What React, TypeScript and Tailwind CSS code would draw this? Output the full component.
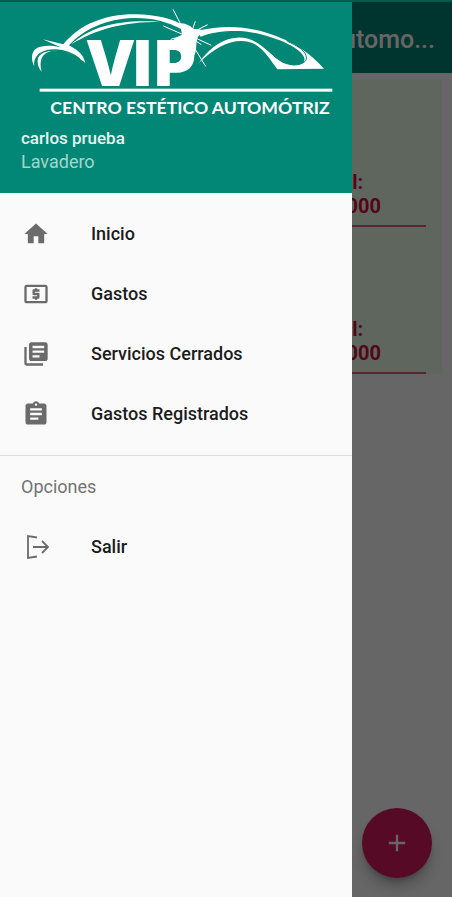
import type { IconType } from "react-icons";
import { MdAssignment, MdHome, MdLibraryBooks, MdLocalAtm, MdAdd } from "react-icons/md";

function Logo() {
  return (
    <svg viewBox="0 0 1056 369" className="block w-full" fill="#fff" role="img" aria-label="VIP Centro Estético Automótriz">
      {/* rear body line */}
      <path d="M128 112 L190 127 C240 65 320 36 405 37 C470 38 520 50 556 74 L545 82 C500 58 455 47 400 48 C320 50 250 82 207 130 C240 148 250 160 256 183 C210 145 160 135 132 158 C120 170 120 190 125 209 C108 190 110 165 124 150 C108 160 100 175 103 193 C92 170 92 140 122 134 C145 129 165 132 182 136 Z" />
      <path d="M214 127 C270 75 350 52 480 59 C370 60 290 80 214 127 Z" />
      <path d="M108 170 C130 132 200 138 240 172" fill="none" stroke="#028675" strokeWidth="4" />
      {/* front body line */}
      <path d="M590 88 C680 65 760 75 830 103 C900 132 935 160 972 200 L832 202 C812 175 795 145 765 127 C715 102 655 125 596 184 C640 120 695 98 745 110 C790 125 815 165 850 183 C890 200 925 185 910 162 C890 125 780 90 720 87 C670 86 630 92 602 104 Z" />
      <path d="M820 160 C860 195 930 195 918 160 C910 142 890 130 862 118" fill="none" stroke="#028675" strokeWidth="3" />
      {/* flash */}
      <path d="M540 64 C556 64 570 70 579 80 L612 84 L594 104 C586 120 592 140 584 158 C574 178 560 184 545 184 L548 130 L520 112 L546 98 Z" />
      <path d="M519 22 L548 78 M577 84 L586 58 M580 90 L623 68 M585 98 L637 91 M582 106 L634 130 M580 112 L604 128 M576 126 L617 193 M550 98 L490 72 M548 102 L512 112" fill="none" stroke="#fff" strokeWidth="3" />
      <g fontFamily="Inter, 'Liberation Sans', sans-serif" fontWeight="900" fontSize="190">
        <text x="256 400 463" y="251">VIP</text>
      </g>
      <rect x="119" y="260" width="878" height="9" />
      <text x="151" y="335" fontFamily="Lato, 'Liberation Sans', sans-serif" fontWeight="700" fontSize="53">
        CENTRO ESTÉTICO AUTOMÓTRIZ
      </text>
    </svg>
  );
}

function ExitIcon() {
  return (
    <svg viewBox="0 0 28 28" className="size-7" fill="none" stroke="currentColor" strokeWidth="2">
      <path d="M15 4.500L6 3V25L15 23.500" strokeWidth="1.800" />
      <path d="M11 14H26M20 8L26 14L20 20" strokeWidth="1.800" />
    </svg>
  );
}

const items: { label: string; Icon: IconType }[] = [
  { label: "Inicio", Icon: MdHome },
  { label: "Gastos", Icon: MdLocalAtm },
  { label: "Servicios Cerrados", Icon: MdLibraryBooks },
  { label: "Gastos Registrados", Icon: MdAssignment },
];

const rowClass = "flex h-15 w-full items-center gap-[41px] pl-[22px] text-left text-[18px] leading-6 font-medium text-[#1c1c1c]";

function Drawer() {
  return (
    <aside className="absolute inset-y-0 left-0 flex w-[352px] flex-col bg-[#fafafa]">
      <header className="h-[191px] bg-[#028675]">
        <Logo />
        <div className="px-[21px] pt-px leading-6">
          <p className="text-[17px] font-medium text-[#e6f5f2]">carlos prueba</p>
          <p className="text-[18px] text-[#a5d6cd]">Lavadero</p>
        </div>
      </header>
      <nav className="pt-[11px]">
        <ul>
          {items.map(({ label, Icon }) => (
            <li key={label}>
              <button type="button" className={rowClass}>
                <Icon className="size-7 text-[#6b6b6b]" />
                {label}
              </button>
            </li>
          ))}
        </ul>
        <hr className="mt-[11px] border-[#dedede]" />
        <h2 className="flex h-[61px] items-center pl-[21px] text-[18px] leading-6 text-[#737373]">Opciones</h2>
        <button type="button" className={rowClass}>
          <span className="text-[#6b6b6b]"><ExitIcon /></span>
          Salir
        </button>
      </nav>
    </aside>
  );
}

function ServiceCard({ total }: { total: string }) {
  return (
    <article className="flex h-[147px] flex-col justify-end border-b-2 border-[#d81b60]/70 pb-[7px] text-[20px] leading-6 font-bold text-[#d0103f]">
      <div className="self-end pr-[45px]">
        <p>Total:</p>
        <p>{total}</p>
      </div>
    </article>
  );
}

export default function App() {
  return (
    <div className="flex min-h-screen flex-col bg-white pb-[3px] font-[Roboto,'Liberation_Sans',sans-serif]">
      <div className="h-[2px] bg-[#005b4f]" />
      <div className="relative flex grow flex-col overflow-hidden">
        <header className="flex h-[71px] items-center justify-end bg-[#008577] pt-1 pr-[17px]">
          <h1 className="text-[25px] leading-8 font-medium text-white">Automo...</h1>
        </header>
        <main className="grow bg-white pt-[7px] pr-[10px]">
          <div className="bg-[#eeffe8] pr-4">
            <ServiceCard total="$ 5.000" />
            <ServiceCard total="$ 5.000" />
          </div>
        </main>
        <button
          type="button"
          aria-label="Agregar"
          className="absolute right-5 bottom-[19px] flex size-[70px] items-center justify-center rounded-full bg-[#d81b60] text-white shadow-lg shadow-black/30"
        >
          <MdAdd className="size-7" />
        </button>
        <div className="absolute inset-0 bg-black/60" />
        <Drawer />
      </div>
    </div>
  );
}
